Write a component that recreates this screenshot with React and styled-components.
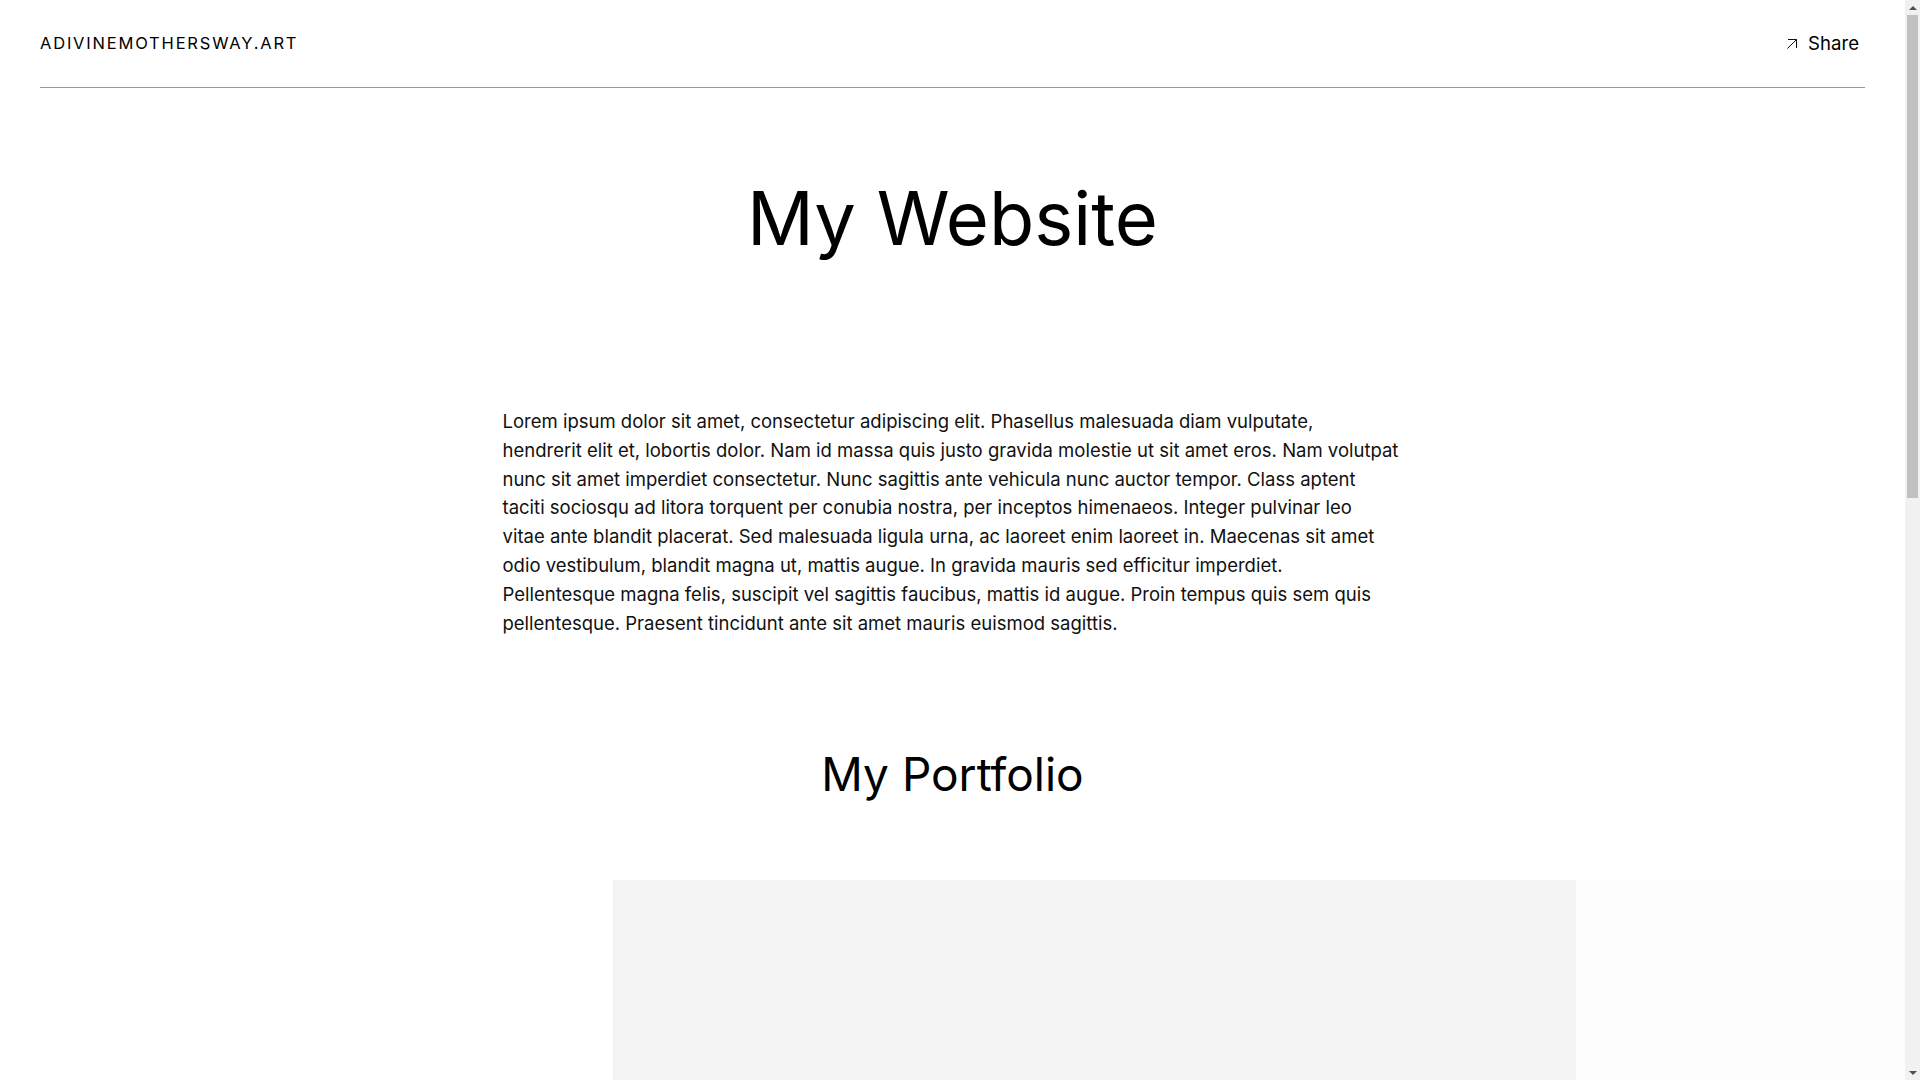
import React from "react";
import styled, { createGlobalStyle } from "styled-components";

const GlobalStyle = createGlobalStyle`
  * { box-sizing: border-box; }
  body {
    margin: 0;
    background: #fff;
    color: #000;
    font-family: "Inter", "Noto Sans", sans-serif;
  }
`;

const bodyLines = [
  "Lorem ipsum dolor sit amet, consectetur adipiscing elit. Phasellus malesuada diam vulputate,",
  "hendrerit elit et, lobortis dolor. Nam id massa quis justo gravida molestie ut sit amet eros. Nam volutpat",
  "nunc sit amet imperdiet consectetur. Nunc sagittis ante vehicula nunc auctor tempor. Class aptent",
  "taciti sociosqu ad litora torquent per conubia nostra, per inceptos himenaeos. Integer pulvinar leo",
  "vitae ante blandit placerat. Sed malesuada ligula urna, ac laoreet enim laoreet in. Maecenas sit amet",
  "odio vestibulum, blandit magna ut, mattis augue. In gravida mauris sed efficitur imperdiet.",
  "Pellentesque magna felis, suscipit vel sagittis faucibus, mattis id augue. Proin tempus quis sem quis",
  "pellentesque. Praesent tincidunt ante sit amet mauris euismod sagittis.",
];

const slides = [{ id: 1 }, { id: 2, faded: true }];

function ShareArrow() {
  return (
    <svg width="12" height="12" viewBox="0 0 12 12" fill="none">
      <path d="M1.5 10.5L10.5 1.5M2 1.5H10.5V10" stroke="#111" strokeWidth="1" />
    </svg>
  );
}

export default function App() {
  return (
    <>
      <GlobalStyle />
      <S.page>
        <S.header>
          <S.logo>ADIVINEMOTHERSWAY.ART</S.logo>
          <S.shareButton type="button">
            <ShareArrow />
            <span>Share</span>
          </S.shareButton>
        </S.header>

        <S.main>
          <S.title>My Website</S.title>
          <S.text>
            {bodyLines.map((line) => (
              <S.textLine key={line}>{line}</S.textLine>
            ))}
          </S.text>

          <S.sectionTitle>My Portfolio</S.sectionTitle>
          <S.carousel>
            <S.track>
              {slides.map((slide) => (
                <S.slide key={slide.id} $faded={slide.faded} />
              ))}
            </S.track>
          </S.carousel>
        </S.main>
      </S.page>

      <S.scrollbar>
        <S.scrollButton $up />
        <S.scrollTrack>
          <S.scrollThumb />
        </S.scrollTrack>
        <S.scrollButton />
      </S.scrollbar>
    </>
  );
}

const S = {
  page: styled.div`
    width: calc(100% - 15px);
    min-height: 2348px;
  `,
  header: styled.header`
    height: 88px;
    margin: 0 40px;
    display: flex;
    align-items: center;
    justify-content: space-between;
    border-bottom: 1px solid #999;
  `,
  logo: styled.div`
    font-size: 16.5px;
    letter-spacing: 1.8px;
    line-height: 1;
  `,
  shareButton: styled.button`
    display: flex;
    align-items: center;
    gap: 10px;
    padding: 0 6px 0 0;
    border: none;
    background: none;
    color: #000;
    font-family: inherit;
    font-size: 18.6px;
    line-height: 1;
    cursor: pointer;
  `,
  main: styled.main`
    display: flex;
    flex-direction: column;
    align-items: center;
  `,
  title: styled.h1`
    margin: 93px 0 0;
    font-size: 74px;
    font-weight: 400;
    line-height: 1;
  `,
  text: styled.p`
    width: 900px;
    margin: 152px 0 0;
    font-size: 18.5px;
    line-height: 28.8px;
    color: #111;
  `,
  textLine: styled.span`
    display: block;
    white-space: nowrap;
  `,
  sectionTitle: styled.h2`
    margin: 114px 0 0;
    font-size: 46px;
    font-weight: 400;
    line-height: 1;
  `,
  carousel: styled.div`
    align-self: stretch;
    margin-top: 83px;
    padding-left: 613px;
    overflow: hidden;
  `,
  track: styled.div`
    display: flex;
  `,
  slide: styled.div`
    flex: 0 0 963px;
    height: 640px;
    background: ${(props) => (props.$faded ? "#fdfdfd" : "#f3f3f3")};
  `,
  scrollbar: styled.div`
    position: fixed;
    top: 0;
    right: 0;
    width: 15px;
    height: 100vh;
    display: flex;
    flex-direction: column;
    background: #f1f1f1;
  `,
  scrollButton: styled.div`
    flex: 0 0 15px;
    display: flex;
    align-items: center;
    justify-content: center;
    &::after {
      content: "";
      border-left: 4px solid transparent;
      border-right: 4px solid transparent;
      ${(props) =>
        props.$up
          ? "border-bottom: 4px solid #505050;"
          : "border-top: 4px solid #505050;"}
    }
  `,
  scrollTrack: styled.div`
    flex: 1;
    padding: 0 2px;
  `,
  scrollThumb: styled.div`
    height: 483px;
    background: #c1c1c1;
  `,
};
